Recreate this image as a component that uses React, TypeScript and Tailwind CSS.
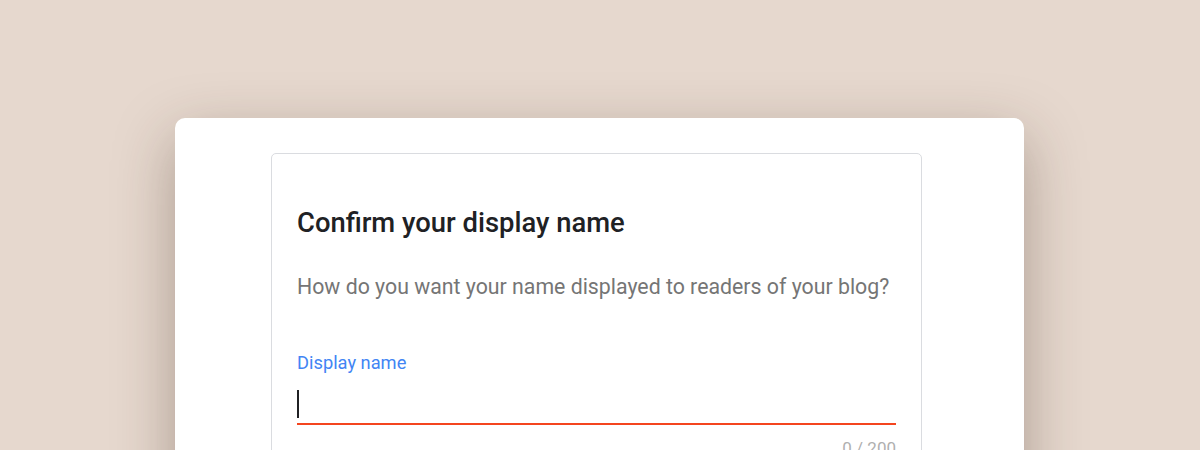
export default function App() {
  return (
    <div
      className="w-[1200px] h-[450px] overflow-hidden bg-[#e6d8ce] pt-[118px] pl-[175px]"
      style={{ fontFamily: 'Roboto, "Noto Sans", sans-serif' }}
    >
      <div className="w-[849px] h-[400px] bg-white rounded-[10px] shadow-[0_20px_60px_rgba(60,40,25,0.35)] pt-[35px] pl-[96px]">
        <div className="w-[651px] h-[380px] border border-[#dadce0] rounded-[5px] pt-[53px] px-[25px]">
          <h1 className="text-[27.4px] font-medium text-[#202124] leading-[32px]">
            Confirm your display name
          </h1>
          <p className="mt-[34px] text-[21.3px] text-[#757575] leading-[28px]">
            How do you want your name displayed to readers of your blog?
          </p>
          <label className="block mt-[51px] text-[18.3px] text-[#4285f4] leading-[22px]">
            Display name
          </label>
          <div className="mt-[14px] h-[37px] border-b-2 border-[#f4451f] flex items-start">
            <span className="block w-[2px] h-[28px] bg-[#202124] mt-[2px]" />
          </div>
          <div className="mt-[13px] text-right text-[17px] text-[#b0b0b0] leading-[20px]">0 / 200</div>
        </div>
      </div>
    </div>
  );
}
